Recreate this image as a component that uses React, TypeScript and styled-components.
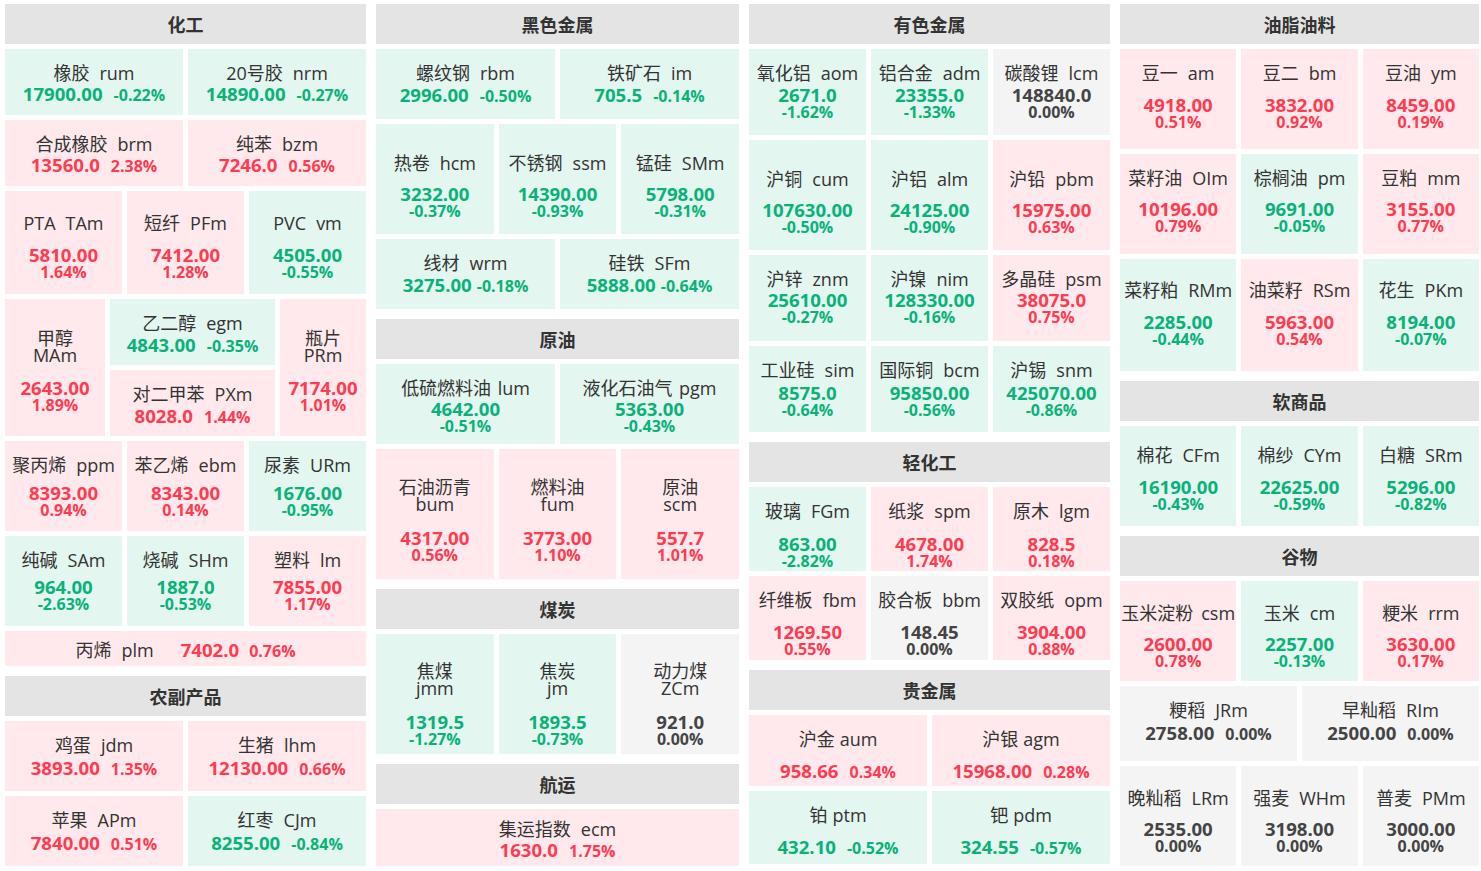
import React from 'react';
import styled, { createGlobalStyle } from 'styled-components';

const GlobalStyle = createGlobalStyle`
  html, body { margin: 0; padding: 0; background: #ffffff; }
  body { font-family: "Open Sans", "Noto Sans CJK SC", sans-serif; color: #333; }
`;

type Tone = 'up' | 'down' | 'flat';
type Mode = 'inline' | 'stack' | 'split' | 'line';

const toneOf = (r: string): Tone => (r.startsWith('-') ? 'down' : r === '0.00%' ? 'flat' : 'up');

const BG: Record<Tone, string> = { up: '#ffe9ec', down: '#e3f6ef', flat: '#f4f4f4' };
const FG: Record<Tone, string> = { up: '#fd3b51', down: '#0ab27a', flat: '#444444' };

interface Item {
  n: string;
  c: string;
  p: string;
  r: string;
  cg?: number;
  pg?: number;
}

interface TileRowSpec {
  kind?: 'row';
  h: number;
  mode: Mode;
  top: number;
  sp: number;
  items: Item[];
}

interface BlockSpec {
  kind: 'block';
  h: number;
  left: Item;
  mid: Item[];
  right: Item;
  grows: [number, number, number];
}

type RowSpec = TileRowSpec | BlockSpec;

interface SectionSpec {
  title: string;
  rows: RowSpec[];
}

const I = (n: string, c: string, p: string, r: string, o: Partial<Item> = {}): Item => ({ n, c, p, r, ...o });

const Board = styled.main`
  display: grid;
  grid-template-columns: 361fr 363fr 361fr 359fr;
  column-gap: 10px;
  padding: 4px 2px 5px 5px;
  align-items: start;
`;

const Column = styled.div`
  display: flex;
  flex-direction: column;
  gap: 10px;
  min-width: 0;
`;

const Section = styled.section`
  display: flex;
  flex-direction: column;
  gap: 5px;
`;

const Head = styled.h2`
  margin: 0;
  height: 40px;
  background: #e4e4e4;
  display: flex;
  align-items: center;
  justify-content: center;
  font-size: 18px;
  font-weight: 700;
  color: #333;
`;

const Row = styled.div<{ $h: number }>`
  display: flex;
  gap: 5px;
  height: ${(p) => p.$h}px;
`;

const Stack = styled.div<{ $grow: number }>`
  display: flex;
  flex-direction: column;
  gap: 5px;
  flex: ${(p) => p.$grow} 1 0;
  min-width: 0;
`;

const Cell = styled.div<{ $tone: Tone; $grow: number; $top: number; $line: boolean }>`
  flex: ${(p) => p.$grow} 1 0;
  min-width: 0;
  min-height: 0;
  box-sizing: border-box;
  background: ${(p) => BG[p.$tone]};
  display: flex;
  flex-direction: ${(p) => (p.$line ? 'row' : 'column')};
  align-items: center;
  justify-content: ${(p) => (p.$line ? 'center' : 'flex-start')};
  padding-top: ${(p) => p.$top}px;
  white-space: nowrap;
  overflow: hidden;
`;

const Name = styled.div<{ $split: boolean }>`
  font-size: 18px;
  line-height: ${(p) => (p.$split ? 17 : 18)}px;
  color: #333;
  text-align: center;
`;

const NameLine = styled.span`
  display: block;
`;

const Code = styled.span<{ $gap: number }>`
  margin-left: ${(p) => p.$gap}px;
`;

const Values = styled.div<{ $inline: boolean; $sp: number; $gap: number; $tone: Tone; $lead: number }>`
  margin-top: ${(p) => p.$sp}px;
  margin-left: ${(p) => p.$lead}px;
  color: ${(p) => FG[p.$tone]};
  font-weight: 700;
  display: flex;
  flex-direction: ${(p) => (p.$inline ? 'row' : 'column')};
  align-items: ${(p) => (p.$inline ? 'baseline' : 'center')};
  gap: ${(p) => (p.$inline ? p.$gap : 0)}px;
`;

const Price = styled.span`
  font-size: 18.6px;
  line-height: 20px;
`;

const Pct = styled.span`
  font-size: 16px;
  line-height: 14px;
`;

function Tile({ d, mode, top, sp, grow = 1 }: { d: Item; mode: Mode; top: number; sp: number; grow?: number }) {
  const tone = toneOf(d.r);
  const split = mode === 'split';
  const line = mode === 'line';
  const inline = mode === 'inline' || line;
  return (
    <Cell $tone={tone} $grow={grow} $top={top} $line={line}>
      <Name $split={split}>
        {split ? (
          <>
            <NameLine>{d.n}</NameLine>
            <NameLine>{d.c}</NameLine>
          </>
        ) : (
          <>
            {d.n}
            <Code $gap={d.cg ?? 10}>{d.c}</Code>
          </>
        )}
      </Name>
      <Values
        $inline={inline}
        $sp={line ? 0 : sp}
        $lead={line ? 27 : 0}
        $gap={d.pg ?? 11}
        $tone={tone}
      >
        <Price>{d.p}</Price>
        <Pct>{d.r}</Pct>
      </Values>
    </Cell>
  );
}

function SectionView({ s }: { s: SectionSpec }) {
  return (
    <Section>
      <Head>{s.title}</Head>
      {s.rows.map((r, i) => {
        if (r.kind === 'block') {
          return (
            <Row key={i} $h={r.h}>
              <Tile d={r.left} mode="split" top={30.5} sp={14} grow={r.grows[0]} />
              <Stack $grow={r.grows[1]}>
                <Tile d={r.mid[0]} mode="inline" top={15} sp={3} />
                <Tile d={r.mid[1]} mode="inline" top={15.5} sp={2.5} />
              </Stack>
              <Tile d={r.right} mode="split" top={30.5} sp={14} grow={r.grows[2]} />
            </Row>
          );
        }
        return (
          <Row key={i} $h={r.h}>
            {r.items.map((d) => (
              <Tile key={d.c} d={d} mode={r.mode} top={r.top} sp={r.sp} />
            ))}
          </Row>
        );
      })}
    </Section>
  );
}

const columns: SectionSpec[][] = [
  [
    {
      title: '化工',
      rows: [
        { h: 66, mode: 'inline', top: 15, sp: 2, items: [I('橡胶', 'rum', '17900.00', '-0.22%'), I('20号胶', 'nrm', '14890.00', '-0.27%')] },
        { h: 66, mode: 'inline', top: 15, sp: 2, items: [I('合成橡胶', 'brm', '13560.0', '2.38%'), I('纯苯', 'bzm', '7246.0', '0.56%')] },
        {
          h: 103, mode: 'stack', top: 22.5, sp: 13,
          items: [I('PTA', 'TAm', '5810.00', '1.64%'), I('短纤', 'PFm', '7412.00', '1.28%'), I('PVC', 'vm', '4505.00', '-0.55%')],
        },
        {
          kind: 'block', h: 137, grows: [100, 165, 86],
          left: I('甲醇', 'MAm', '2643.00', '1.89%'),
          mid: [I('乙二醇', 'egm', '4843.00', '-0.35%'), I('对二甲苯', 'PXm', '8028.0', '1.44%')],
          right: I('瓶片', 'PRm', '7174.00', '1.01%'),
        },
        {
          h: 90, mode: 'stack', top: 15, sp: 9,
          items: [I('聚丙烯', 'ppm', '8393.00', '0.94%'), I('苯乙烯', 'ebm', '8343.00', '0.14%'), I('尿素', 'URm', '1676.00', '-0.95%')],
        },
        {
          h: 90, mode: 'stack', top: 14.5, sp: 8.5,
          items: [I('纯碱', 'SAm', '964.00', '-2.63%'), I('烧碱', 'SHm', '1887.0', '-0.53%'), I('塑料', 'lm', '7855.00', '1.17%')],
        },
        { h: 35, mode: 'line', top: 3, sp: 0, items: [I('丙烯', 'plm', '7402.0', '0.76%', { pg: 10 })] },
      ],
    },
    {
      title: '农副产品',
      rows: [
        { h: 70, mode: 'inline', top: 15, sp: 4, items: [I('鸡蛋', 'jdm', '3893.00', '1.35%'), I('生猪', 'lhm', '12130.00', '0.66%')] },
        { h: 70, mode: 'inline', top: 15, sp: 4, items: [I('苹果', 'APm', '7840.00', '0.51%'), I('红枣', 'CJm', '8255.00', '-0.84%')] },
      ],
    },
  ],
  [
    {
      title: '黑色金属',
      rows: [
        { h: 70, mode: 'inline', top: 15, sp: 3, items: [I('螺纹钢', 'rbm', '2996.00', '-0.50%'), I('铁矿石', 'im', '705.5', '-0.14%')] },
        {
          h: 110, mode: 'stack', top: 30, sp: 12,
          items: [I('热卷', 'hcm', '3232.00', '-0.37%'), I('不锈钢', 'ssm', '14390.00', '-0.93%'), I('锰硅', 'SMm', '5798.00', '-0.31%')],
        },
        {
          h: 70, mode: 'inline', top: 15, sp: 3,
          items: [I('线材', 'wrm', '3275.00', '-0.18%', { pg: 5 }), I('硅铁', 'SFm', '5888.00', '-0.64%', { pg: 5 })],
        },
      ],
    },
    {
      title: '原油',
      rows: [
        {
          h: 80, mode: 'stack', top: 15, sp: 2,
          items: [I('低硫燃料油', 'lum', '4642.00', '-0.51%', { cg: 6.5 }), I('液化石油气', 'pgm', '5363.00', '-0.43%', { cg: 6.5 })],
        },
        {
          h: 130, mode: 'split', top: 30, sp: 14.5,
          items: [I('石油沥青', 'bum', '4317.00', '0.56%'), I('燃料油', 'fum', '3773.00', '1.10%'), I('原油', 'scm', '557.7', '1.01%')],
        },
      ],
    },
    {
      title: '煤炭',
      rows: [
        {
          h: 120, mode: 'split', top: 28.5, sp: 15,
          items: [I('焦煤', 'jmm', '1319.5', '-1.27%'), I('焦炭', 'jm', '1893.5', '-0.73%'), I('动力煤', 'ZCm', '921.0', '0.00%')],
        },
      ],
    },
    {
      title: '航运',
      rows: [{ h: 57, mode: 'inline', top: 10.5, sp: 2, items: [I('集运指数', 'ecm', '1630.0', '1.75%')] }],
    },
  ],
  [
    {
      title: '有色金属',
      rows: [
        {
          h: 86, mode: 'stack', top: 15, sp: 3,
          items: [I('氧化铝', 'aom', '2671.0', '-1.62%'), I('铝合金', 'adm', '23355.0', '-1.33%'), I('碳酸锂', 'lcm', '148840.0', '0.00%')],
        },
        {
          h: 110, mode: 'stack', top: 30, sp: 12,
          items: [I('沪铜', 'cum', '107630.00', '-0.50%'), I('沪铝', 'alm', '24125.00', '-0.90%'), I('沪铅', 'pbm', '15975.00', '0.63%')],
        },
        {
          h: 86, mode: 'stack', top: 14.5, sp: 2.5,
          items: [I('沪锌', 'znm', '25610.00', '-0.27%'), I('沪镍', 'nim', '128330.00', '-0.16%'), I('多晶硅', 'psm', '38075.0', '0.75%')],
        },
        {
          h: 86, mode: 'stack', top: 15, sp: 3.5,
          items: [I('工业硅', 'sim', '8575.0', '-0.64%'), I('国际铜', 'bcm', '95850.00', '-0.56%'), I('沪锡', 'snm', '425070.00', '-0.86%')],
        },
      ],
    },
    {
      title: '轻化工',
      rows: [
        {
          h: 84, mode: 'stack', top: 15, sp: 13.5,
          items: [I('玻璃', 'FGm', '863.00', '-2.82%'), I('纸浆', 'spm', '4678.00', '1.74%'), I('原木', 'lgm', '828.5', '0.18%')],
        },
        {
          h: 84, mode: 'stack', top: 15, sp: 13.3,
          items: [I('纤维板', 'fbm', '1269.50', '0.55%'), I('胶合板', 'bbm', '148.45', '0.00%'), I('双胶纸', 'opm', '3904.00', '0.88%')],
        },
      ],
    },
    {
      title: '贵金属',
      rows: [
        {
          h: 71, mode: 'inline', top: 15, sp: 12.7,
          items: [I('沪金', 'aum', '958.66', '0.34%', { cg: 5 }), I('沪银', 'agm', '15968.00', '0.28%', { cg: 5 })],
        },
        {
          h: 73, mode: 'inline', top: 15, sp: 12.7,
          items: [I('铂', 'ptm', '432.10', '-0.52%', { cg: 5 }), I('钯', 'pdm', '324.55', '-0.57%', { cg: 5 })],
        },
      ],
    },
  ],
  [
    {
      title: '油脂油料',
      rows: [
        {
          h: 100, mode: 'stack', top: 14.7, sp: 13.3,
          items: [I('豆一', 'am', '4918.00', '0.51%'), I('豆二', 'bm', '3832.00', '0.92%'), I('豆油', 'ym', '8459.00', '0.19%')],
        },
        {
          h: 100, mode: 'stack', top: 15.3, sp: 12,
          items: [I('菜籽油', 'OIm', '10196.00', '0.79%'), I('棕榈油', 'pm', '9691.00', '-0.05%'), I('豆粕', 'mm', '3155.00', '0.77%')],
        },
        {
          h: 112, mode: 'stack', top: 22, sp: 13.3,
          items: [I('菜籽粕', 'RMm', '2285.00', '-0.44%'), I('油菜籽', 'RSm', '5963.00', '0.54%'), I('花生', 'PKm', '8194.00', '-0.07%')],
        },
      ],
    },
    {
      title: '软商品',
      rows: [
        {
          h: 100, mode: 'stack', top: 19.7, sp: 13,
          items: [I('棉花', 'CFm', '16190.00', '-0.43%'), I('棉纱', 'CYm', '22625.00', '-0.59%'), I('白糖', 'SRm', '5296.00', '-0.82%')],
        },
      ],
    },
    {
      title: '谷物',
      rows: [
        {
          h: 100, mode: 'stack', top: 23.3, sp: 11.7,
          items: [I('玉米淀粉', 'csm', '2600.00', '0.78%', { cg: 8 }), I('玉米', 'cm', '2257.00', '-0.13%'), I('粳米', 'rrm', '3630.00', '0.17%')],
        },
        {
          h: 75, mode: 'inline', top: 15, sp: 3.7,
          items: [I('粳稻', 'JRm', '2758.00', '0.00%'), I('早籼稻', 'RIm', '2500.00', '0.00%')],
        },
        {
          h: 100, mode: 'stack', top: 23.3, sp: 12,
          items: [I('晚籼稻', 'LRm', '2535.00', '0.00%'), I('强麦', 'WHm', '3198.00', '0.00%'), I('普麦', 'PMm', '3000.00', '0.00%')],
        },
      ],
    },
  ],
];

export default function App() {
  return (
    <>
      <GlobalStyle />
      <Board>
        {columns.map((col, ci) => (
          <Column key={ci}>
            {col.map((s) => (
              <SectionView key={s.title} s={s} />
            ))}
          </Column>
        ))}
      </Board>
    </>
  );
}
